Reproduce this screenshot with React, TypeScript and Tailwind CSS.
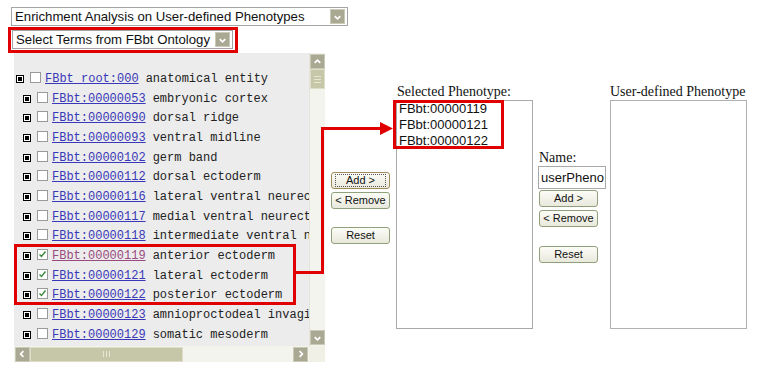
import React from "react";

const rows: { id: string; label: string; root?: boolean; checked?: boolean; visited?: boolean }[] = [
  { id: "FBbt root:000", label: "anatomical entity", root: true },
  { id: "FBbt:00000053", label: "embryonic cortex" },
  { id: "FBbt:00000090", label: "dorsal ridge" },
  { id: "FBbt:00000093", label: "ventral midline" },
  { id: "FBbt:00000102", label: "germ band" },
  { id: "FBbt:00000112", label: "dorsal ectoderm" },
  { id: "FBbt:00000116", label: "lateral ventral neurectoderm" },
  { id: "FBbt:00000117", label: "medial ventral neurectoderm" },
  { id: "FBbt:00000118", label: "intermediate ventral neurectoderm" },
  { id: "FBbt:00000119", label: "anterior ectoderm", checked: true, visited: true },
  { id: "FBbt:00000121", label: "lateral ectoderm", checked: true },
  { id: "FBbt:00000122", label: "posterior ectoderm", checked: true },
  { id: "FBbt:00000123", label: "amnioproctodeal invagination" },
  { id: "FBbt:00000129", label: "somatic mesoderm" },
];

function ArrowBtn({ dir, className = "" }: { dir: "down" | "up" | "left" | "right"; className?: string }) {
  const paths: Record<string, string> = {
    down: "M4 6 L7 9 L10 6",
    up: "M4 8 L7 5 L10 8",
    left: "M8 4 L5 7 L8 10",
    right: "M6 4 L9 7 L6 10",
  };
  return (
    <div className={"flex items-center justify-center bg-[#a9a993] border border-[#c9c9b6] " + className}>
      <svg width="14" height="14" viewBox="0 0 14 14">
        <path d={paths[dir]} stroke="white" strokeWidth="1.8" fill="none" />
      </svg>
    </div>
  );
}

function Select({ text, width }: { text: string; width: string }) {
  return (
    <div className={"flex items-center justify-between h-[19px] border border-[#a5a5a5] bg-white pl-[3px] pr-[2px] " + width}>
      <span className="text-[13.2px] leading-none text-[#111] font-['Liberation_Sans',Arial,sans-serif] whitespace-nowrap">{text}</span>
      <ArrowBtn dir="down" className="w-[15px] h-[15px]" />
    </div>
  );
}

function Btn({ children, focus }: { children: React.ReactNode; focus?: boolean }) {
  return (
    <div
      className={
        "w-[59px] h-[17px] rounded-[3px] border flex items-center justify-center bg-gradient-to-b from-[#fdfdf8] to-[#e8e8dc] text-[11px] leading-none text-[#111] font-['Liberation_Sans',Arial,sans-serif] whitespace-nowrap " +
        (focus ? "border-[#a08a5a]" : "border-[#8fa07a]")
      }
    >
      {focus ? (
        <span className="border border-dotted border-[#555] px-[10px] h-[13px] flex items-center">{children}</span>
      ) : (
        <span>{children}</span>
      )}
    </div>
  );
}

function Expander() {
  return (
    <div className="w-[8px] h-[8px] border border-black bg-white flex items-center justify-center shrink-0">
      <div className="w-[4px] h-[4px] bg-black" />
    </div>
  );
}

function Check({ checked }: { checked?: boolean }) {
  return (
    <div className="w-[11px] h-[11px] border border-[#9a9a9a] bg-white shrink-0 -mt-[3px] flex items-center justify-center">
      {checked && (
        <svg width="9" height="9" viewBox="0 0 9 9">
          <path d="M1.5 4.5 L3.5 6.5 L7.5 1.5" stroke="#3a8a3a" strokeWidth="1.4" fill="none" />
        </svg>
      )}
    </div>
  );
}

export default function App() {
  return (
    <div className="relative w-[761px] h-[369px] bg-white overflow-hidden">
      <div className="pl-[11px] pt-[7px]">
        <Select text="Enrichment Analysis on User-defined Phenotypes" width="w-[337px]" />
      </div>
      <div className="flex mt-[4px]">
        {/* left column */}
        <div className="flex flex-col ml-[12px] w-[313px]">
          <Select text="Select Terms from FBbt Ontology" width="w-[221px]" />
          <div className="ml-[2px] mt-[4px] grid grid-cols-[295px_16px] grid-rows-[293px_16px] w-[311px] h-[309px] bg-[#ececec]">
            <div className="overflow-hidden pt-[16px]">
              {rows.map((r) => (
                <div
                  key={r.id}
                  className={"flex items-center h-[19.7px] whitespace-nowrap font-['Liberation_Mono','Courier_New',monospace] text-[12px] leading-none " + (r.root ? "pl-[2px]" : "pl-[9px]")}
                >
                  <Expander />
                  <div className="w-[6px] shrink-0" />
                  <Check checked={r.checked} />
                  <a className={"ml-[4px] underline " + (r.visited ? "text-[#9a4a80]" : "text-[#3838b8]")}>{r.id}</a>
                  <span className="ml-[7px] text-[#222]">{r.label}</span>
                </div>
              ))}
            </div>
            {/* vertical scrollbar */}
            <div className="flex flex-col bg-[#f4f4ee] border-l border-[#e4e4dc] pt-[1px]">
              <ArrowBtn dir="up" className="w-[15px] h-[15px]" />
              <div className="w-[15px] h-[20px] bg-[#c6c6a8] border border-[#dedec8] flex flex-col items-center justify-center gap-[2px]">
                <div className="w-[7px] h-[1px] bg-[#e6e6d2]" />
                <div className="w-[7px] h-[1px] bg-[#e6e6d2]" />
                <div className="w-[7px] h-[1px] bg-[#e6e6d2]" />
              </div>
              <div className="flex-1" />
              <ArrowBtn dir="down" className="w-[15px] h-[15px] mb-[1px]" />
            </div>
            {/* horizontal scrollbar */}
            <div className="flex items-center bg-[#f4f4ee] pl-[1px]">
              <ArrowBtn dir="left" className="w-[15px] h-[15px]" />
              <div className="w-[153px] h-[15px] bg-[#c6c6a8] border border-[#dedec8] flex items-center justify-center gap-[2px]">
                <div className="w-[1px] h-[6px] bg-[#e6e6d2]" />
                <div className="w-[1px] h-[6px] bg-[#e6e6d2]" />
                <div className="w-[1px] h-[6px] bg-[#e6e6d2]" />
              </div>
              <div className="flex-1" />
              <ArrowBtn dir="right" className="w-[15px] h-[15px] mr-[1px]" />
            </div>
            <div className="bg-[#f0f0e6]" />
          </div>
        </div>

        {/* middle buttons */}
        <div className="flex flex-col ml-[6px] mt-[142px] gap-[3px]">
          <Btn focus>Add &gt;</Btn>
          <Btn>&lt; Remove</Btn>
          <div className="h-[12px]" />
          <Btn>Reset</Btn>
        </div>

        {/* selected phenotype */}
        <div className="flex flex-col ml-[6px] mt-[54px]">
          <div className="text-[14px] leading-[16px] font-['Liberation_Serif','Times_New_Roman',serif] text-[#111] ml-[1px] whitespace-nowrap">Selected Phenotype:</div>
          <div className="w-[137px] h-[229px] border border-[#a8a8a8] bg-white pl-[2px] text-[13px] leading-[16px] font-['Liberation_Sans',Arial,sans-serif] text-[#111]">
            <div>FBbt:00000119</div>
            <div>FBbt:00000121</div>
            <div>FBbt:00000122</div>
          </div>
        </div>

        {/* name column */}
        <div className="flex flex-col ml-[5px] mt-[120px]">
          <div className="text-[14px] leading-[16px] font-['Liberation_Serif','Times_New_Roman',serif] text-[#111] ml-[1px]">Name:</div>
          <div className="w-[68px] h-[23px] border border-[#a8a8a8] bg-white flex items-center pl-[2px] overflow-hidden text-[13px] font-['Liberation_Sans',Arial,sans-serif] text-[#111] whitespace-nowrap">userPheno</div>
          <div className="flex flex-col ml-[1px] mt-[1px] gap-[3px]">
            <Btn>Add &gt;</Btn>
            <Btn>&lt; Remove</Btn>
            <div className="h-[13px]" />
            <Btn>Reset</Btn>
          </div>
        </div>

        {/* user-defined phenotype */}
        <div className="flex flex-col ml-[4px] mt-[54px]">
          <div className="text-[14px] leading-[16px] font-['Liberation_Serif','Times_New_Roman',serif] text-[#111] whitespace-nowrap">User-defined Phenotype</div>
          <div className="w-[137px] h-[229px] border border-[#b0b0b0] bg-white" />
        </div>
      </div>

      {/* red annotations */}
      <div className="absolute left-[8px] top-[27px] w-[230px] h-[26px] border-[3px] border-[#e00000]" />
      <div className="absolute left-[14px] top-[244px] w-[282px] h-[61px] border-[3px] border-[#e00000]" />
      <div className="absolute left-[393px] top-[100px] w-[111px] h-[49px] border-[3px] border-[#e00000]" />
      <svg className="absolute left-0 top-0" width="761" height="369">
        <polyline points="295,272.5 322.5,272.5 322.5,128.5 382,128.5" stroke="#e00000" strokeWidth="3" fill="none" />
        <polygon points="380,122 393,128.5 380,135" fill="#e00000" />
      </svg>
    </div>
  );
}
